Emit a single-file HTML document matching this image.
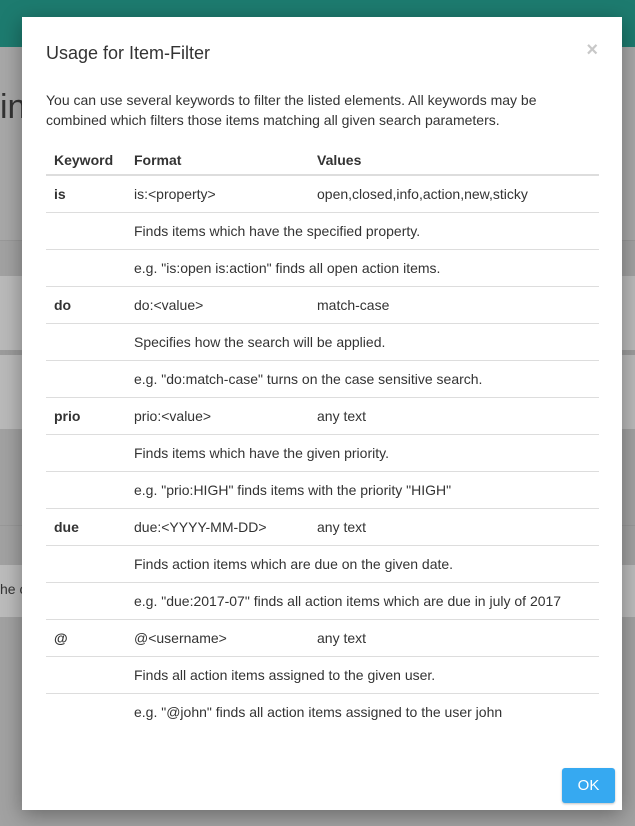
<!DOCTYPE html>
<html><head><meta charset="utf-8"><style>
*{margin:0;padding:0;box-sizing:border-box}
body{width:635px;height:826px;overflow:hidden;background:#a2a2a2;font-family:"Liberation Sans",Arial,sans-serif;position:relative}
.bg{position:absolute;left:0;right:0}
.modal{position:absolute;left:22px;top:17px;width:600px;height:793px;background:#fff;box-shadow:0 5px 20px rgba(0,0,0,.35)}
h4{position:absolute;left:24px;top:26px;font-size:18px;font-weight:normal;color:#333}
.x{position:absolute;right:24px;top:22px;font-size:20px;font-weight:bold;color:#c8c8c8}
p{position:absolute;left:24px;top:73px;width:520px;font-size:14px;line-height:20px;color:#333}
table{position:absolute;left:24px;top:128px;width:553px;border-collapse:collapse;font-size:14px;color:#333}
th{text-align:left;font-weight:bold;height:30px;padding:0 8px;border-bottom:2px solid #ddd;vertical-align:middle}
td{height:37px;padding:0 8px;border-top:1px solid #ddd;vertical-align:middle}
tr:nth-child(2) td{border-top:none}
td b{font-weight:bold}
.ok{position:absolute;left:540px;top:751px;width:53px;height:35px;background:#36a9f1;color:#fff;border-radius:3px;font-size:15px;text-align:center;line-height:35px;box-shadow:0 1px 2px rgba(0,0,0,.25)}
</style></head><body>
<div class="bg" style="top:0;height:47px;background:#1d7b6f"></div>
<div class="bg" style="top:47px;height:193px;background:#a8a8a8"></div>
<div style="position:absolute;left:0;top:88px;font-size:34px;color:#333">in</div>
<div class="bg" style="top:240px;height:1px;background:#999"></div>
<div class="bg" style="top:276px;height:74px;background:#bababa"></div>
<div class="bg" style="top:350px;height:5px;background:#9c9c9c"></div>
<div class="bg" style="top:355px;height:74px;background:#bababa"></div>
<div class="bg" style="top:525px;height:1px;background:#999"></div>
<div class="bg" style="top:565px;height:52px;background:#bcbcbc"></div>
<div style="position:absolute;left:0;top:581px;font-size:14px;color:#333">he c</div>
<div class="modal">
<h4>Usage for Item-Filter</h4>
<div class="x">×</div>
<p>You can use several keywords to filter the listed elements. All keywords may be combined which filters those items matching all given search parameters.</p>
<table>
<tr><th style="width:80px">Keyword</th><th style="width:183px">Format</th><th>Values</th></tr>
<tr><td><b>is</b></td><td>is:&lt;property&gt;</td><td>open,closed,info,action,new,sticky</td></tr>
<tr><td></td><td colspan="2">Finds items which have the specified property.</td></tr>
<tr><td></td><td colspan="2">e.g. "is:open is:action" finds all open action items.</td></tr>
<tr><td><b>do</b></td><td>do:&lt;value&gt;</td><td>match-case</td></tr>
<tr><td></td><td colspan="2">Specifies how the search will be applied.</td></tr>
<tr><td></td><td colspan="2">e.g. "do:match-case" turns on the case sensitive search.</td></tr>
<tr><td><b>prio</b></td><td>prio:&lt;value&gt;</td><td>any text</td></tr>
<tr><td></td><td colspan="2">Finds items which have the given priority.</td></tr>
<tr><td></td><td colspan="2">e.g. "prio:HIGH" finds items with the priority "HIGH"</td></tr>
<tr><td><b>due</b></td><td>due:&lt;YYYY-MM-DD&gt;</td><td>any text</td></tr>
<tr><td></td><td colspan="2">Finds action items which are due on the given date.</td></tr>
<tr><td></td><td colspan="2">e.g. "due:2017-07" finds all action items which are due in july of 2017</td></tr>
<tr><td><b>@</b></td><td>@&lt;username&gt;</td><td>any text</td></tr>
<tr><td></td><td colspan="2">Finds all action items assigned to the given user.</td></tr>
<tr><td></td><td colspan="2">e.g. "@john" finds all action items assigned to the user john</td></tr>
</table>
<div class="ok">OK</div>
</div>
</body></html>
